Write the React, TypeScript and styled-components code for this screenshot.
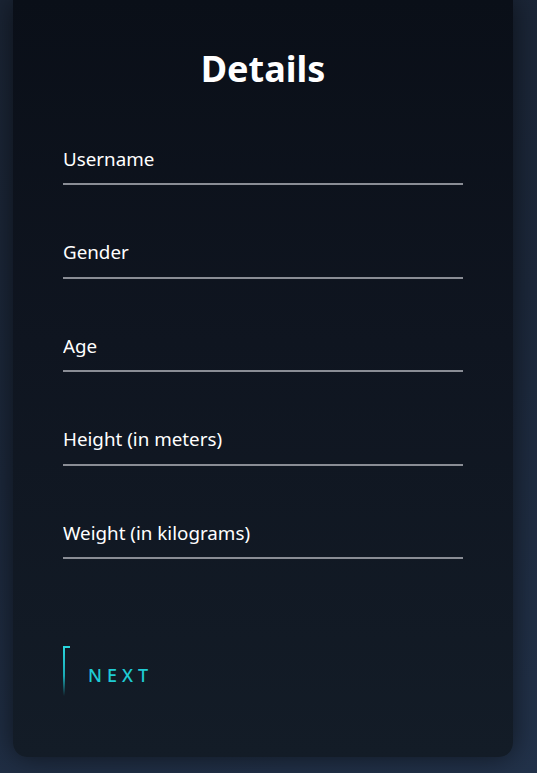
import React from "react";
import styled, { createGlobalStyle } from "styled-components";

const GlobalStyle = createGlobalStyle`
  html, body {
    margin: 0;
    padding: 0;
    height: 100%;
  }
  body {
    font-family: "Noto Sans", "Open Sans", sans-serif;
    background: linear-gradient(160deg, #1a2434 0%, #1c283b 50%, #22324a 100%);
    overflow: hidden;
  }
`;

const Page = styled.div`
  height: 773px;
  box-sizing: border-box;
  padding: 0 25px 16px 13px;
  display: flex;
`;

const Card = styled.form`
  flex: 1;
  display: flex;
  flex-direction: column;
  box-sizing: border-box;
  padding: 44px 50px 0 50px;
  border-radius: 0 0 14px 14px;
  background: linear-gradient(180deg, #0a0f18 0%, #0f1520 45%, #131c27 100%);
  box-shadow: 0 0 28px rgba(0, 0, 0, 0.55);
`;

const Title = styled.h1`
  margin: 0;
  text-align: center;
  color: #ffffff;
  font-size: 36px;
  font-weight: 700;
  line-height: 50px;
`;

const Fields = styled.div`
  display: flex;
  flex-direction: column;
  gap: 51.5px;
  margin-top: 49px;
  width: 400px;
`;

const Field = styled.input`
  display: block;
  box-sizing: border-box;
  width: 100%;
  height: 42px;
  padding: 0 0 9px 0;
  border: none;
  border-bottom: 2px solid #8a8d95;
  background: transparent;
  outline: none;
  color: #ffffff;
  font-family: inherit;
  font-size: 18.8px;
  &::placeholder {
    color: #ffffff;
    opacity: 1;
  }
`;

const NextButton = styled.button`
  position: relative;
  align-self: flex-start;
  margin-top: 87px;
  height: 50px;
  padding: 8px 0 0 25px;
  border: none;
  background: transparent;
  color: #1fcbd4;
  font-family: inherit;
  font-size: 18px;
  font-weight: 500;
  letter-spacing: 5px;
  cursor: pointer;
  display: flex;
  align-items: center;

  &::before {
    content: "";
    position: absolute;
    left: 0;
    top: 0;
    width: 2px;
    height: 50px;
    background: linear-gradient(180deg, #2ad6de 0%, #1aa9b4 60%, rgba(20, 120, 140, 0) 100%);
  }
  &::after {
    content: "";
    position: absolute;
    left: 0;
    top: 0;
    width: 7px;
    height: 2px;
    background: #2ad6de;
  }
`;

export default function App() {
  return (
    <>
      <GlobalStyle />
      <Page>
        <Card onSubmit={(e) => e.preventDefault()}>
          <Title>Details</Title>
          <Fields>
            <Field type="text" placeholder="Username" />
            <Field type="text" placeholder="Gender" />
            <Field type="text" placeholder="Age" />
            <Field type="text" placeholder="Height (in meters)" />
            <Field type="text" placeholder="Weight (in kilograms)" />
          </Fields>
          <NextButton type="submit">NEXT</NextButton>
        </Card>
      </Page>
    </>
  );
}
